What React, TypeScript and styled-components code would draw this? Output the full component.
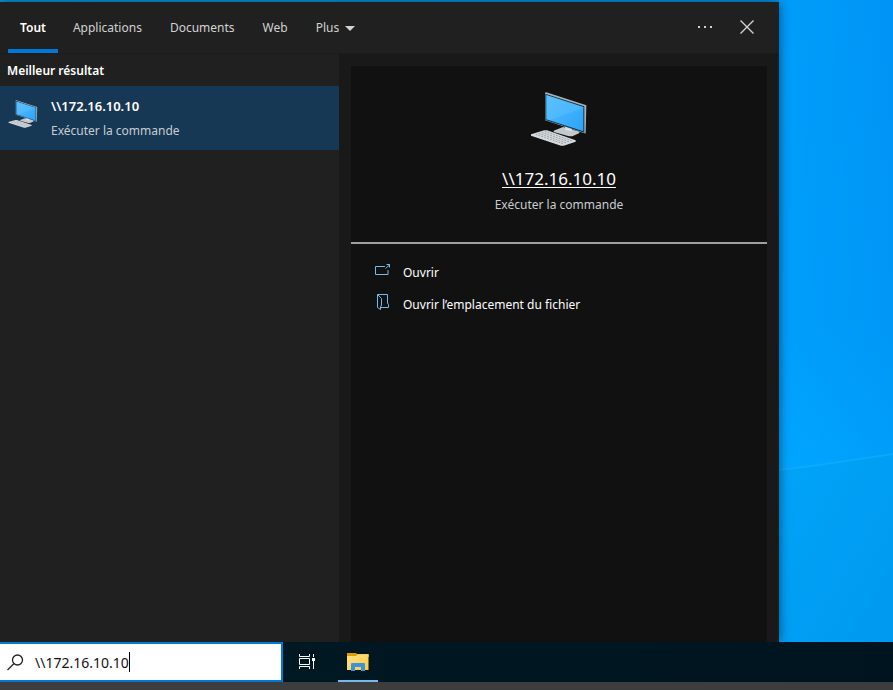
import React, { useState } from "react";
import styled, { createGlobalStyle } from "styled-components";

const GlobalStyle = createGlobalStyle`
  *, *::before, *::after { box-sizing: border-box; }
  body {
    margin: 0;
    font-family: "Noto Sans", "Open Sans", sans-serif;
    font-size: 12px;
    line-height: 20px;
    color: #fff;
  }
  button, input { font: inherit; color: inherit; border: 0; padding: 0; background: none; }
  h1, h2, p, ul { margin: 0; padding: 0; font: inherit; }
  svg { display: block; flex: none; }
`;

const Screen = styled.div`
  display: flex;
  flex-direction: column;
  min-height: 100vh;
  background: #3d3d3e;
`;

const Desktop = styled.main`
  flex: 1;
  display: grid;
  grid-template-columns: minmax(0, 1fr) 114px;
  padding-top: 2px;
  overflow: hidden;
  background: linear-gradient(90deg, #0a96de, #0096ea);
`;

const Wallpaper = styled.svg`
  width: 100%;
  height: calc(100% + 2px);
  margin-top: -2px;
`;

const Panel = styled.section`
  display: flex;
  flex-direction: column;
  z-index: 1;
  background: #191919;
  box-shadow: 0 0 10px rgba(0, 20, 40, 0.6);
`;

const Header = styled.header`
  display: flex;
  justify-content: space-between;
  height: 52px;
  padding: 0 19px 0 8px;
  background: #202020;
  border-bottom: 1px solid #1c1c1c;
`;

const Tabs = styled.nav`
  display: flex;
  gap: 2px;
`;

const Tab = styled.button<{ $active?: boolean }>`
  display: flex;
  align-items: center;
  gap: 6px;
  padding: 5px ${(p) => (p.$active ? "12px" : "13px")} 0;
  border-bottom: 4px solid ${(p) => (p.$active ? "#0078d7" : "transparent")};
  color: ${(p) => (p.$active ? "#fff" : "#d2d2d2")};
  font-weight: ${(p) => (p.$active ? 600 : 400)};
`;

const WindowActions = styled.div`
  display: flex;
  align-items: center;
  gap: 16px;
  padding-bottom: 2px;
`;

const IconButton = styled.button`
  display: grid;
  place-items: center;
  width: 26px;
  height: 32px;
  color: #d2d2d2;
`;

const Columns = styled.div`
  flex: 1;
  display: grid;
  grid-template-columns: 339px minmax(0, 1fr);
`;

const Results = styled.div`
  background: #202020;
`;

const GroupTitle = styled.h2`
  padding: 7px 7px 5px;
  font-weight: 600;
`;

const Result = styled.button`
  display: flex;
  gap: 13px;
  width: 100%;
  height: 64px;
  padding: 10px 8px 9px;
  text-align: left;
  background: #173854;
`;

const ResultIcon = styled.span`
  padding-top: 4px;
`;

const ResultText = styled.span`
  display: flex;
  flex-direction: column;
  gap: 5px;
`;

const ResultName = styled.span`
  font-size: 13px;
  font-weight: 600;
`;

const Kind = styled.span`
  color: #c8ccd0;
`;

const Preview = styled.article`
  margin: 12px 12px 0;
  background: #111;
`;

const Hero = styled.div`
  display: flex;
  flex-direction: column;
  align-items: center;
  height: 178px;
  padding-top: 26px;
  border-bottom: 2px solid #a0a0a0;
`;

const HeroName = styled.a`
  margin: 20px 0 3px;
  font-size: 17px;
  line-height: 26px;
  color: #fff;
  text-decoration: underline;
  text-decoration-thickness: 1px;
  text-underline-offset: 2px;
`;

const Actions = styled.ul`
  padding: 12px 0;
  list-style: none;
`;

const Action = styled.button`
  display: flex;
  align-items: center;
  gap: 12px;
  width: 100%;
  height: 32px;
  padding: 2px 24px 0;
  text-align: left;

  svg { margin-bottom: 6px; }
`;

const Taskbar = styled.footer`
  display: flex;
  height: 40px;
  margin-bottom: 8px;
  background: linear-gradient(90deg, #001a22, #001420);
`;

const SearchBox = styled.label`
  display: flex;
  align-items: center;
  width: 283px;
  padding-left: 7px;
  border: 2px solid #0078d7;
  border-left: 0;
  background: #fff;
  color: #111;
`;

const SearchInput = styled.input`
  field-sizing: content;
  margin-left: 11px;
  padding-top: 2px;
  font-size: 14px;
  outline: 0;
`;

const Caret = styled.span`
  width: 1px;
  height: 20px;
  background: #000;
`;

const TaskButton = styled.button<{ $running?: boolean }>`
  display: grid;
  place-items: center;
  width: ${(p) => (p.$running ? "40px" : "49px")};
  margin-right: ${(p) => (p.$running ? "0" : "6px")};
  padding-top: ${(p) => (p.$running ? "2px" : "0")};
  border-bottom: 2px solid ${(p) => (p.$running ? "#76b9ed" : "transparent")};
`;

function ComputerIcon({ width, height }: { width: number; height: number }) {
  return (
    <svg width={width} height={height} viewBox="36 34 168 162" aria-hidden="true">
      <defs>
        <linearGradient id="screen" x1="0" y1="0" x2="1" y2="1">
          <stop offset="0" stopColor="#55bdff" />
          <stop offset="1" stopColor="#2ba4fb" />
        </linearGradient>
      </defs>
      <path d="M104 150 L132 139 L182 153 L180 158 L160 167 L150 167 L104 154Z" fill="#c3c9cd" />
      <path d="M137 132 L160 139 L158 152 L139 149Z" fill="#dce0e2" />
      <path d="M78 36 L82 35 L202 74 L200 158 L196 158 L78 119Z" fill="#a8b1b7" />
      <path d="M79 39 L196 77 L196 156 L79 118Z" fill="#15344c" />
      <path d="M82 43 L193 79 L193 152 L82 116Z" fill="url(#screen)" />
      <path d="M82 43 L193 79 L193 82 L92 119 L82 116Z" fill="#66c5ff" opacity=".35" />
      <path d="M36 161 L76 149 L84 149 L170 179 L170 183 L134 195 L126 195 L36 165Z" fill="#d5dadd" />
      <g stroke="#8e979d" strokeWidth="2.5" strokeDasharray="6 3">
        <path d="M50 161 L134 190" />
        <path d="M59 158 L142 187" />
        <path d="M68 155 L151 184" />
        <path d="M77 152 L160 181" />
      </g>
    </svg>
  );
}

function OpenIcon() {
  return (
    <svg width="16" height="16" viewBox="0 0 16 16" fill="none" stroke="#76b9ed" aria-hidden="true">
      <path d="M10 4.500H.5v8h12.500V8M10.500 6.500L15 2.500M11.500 2.500H14.500V5.500" />
    </svg>
  );
}

function LocationIcon() {
  return (
    <svg width="16" height="16" viewBox="0 0 16 16" fill="none" stroke="#76b9ed" aria-hidden="true">
      <path d="M2.500.5H12.500V9L13.500 10.500V13.500H6M2.500.5V13.500L5.500 15.500V13L6.500 11V4.500L2.500.5" />
    </svg>
  );
}

function TaskViewIcon() {
  return (
    <svg width="17" height="17" viewBox="0 0 17 17" fill="none" stroke="#fff" aria-hidden="true">
      <path d="M.5 1V3.500H10.500V1M.5 5.500H10.500V11.500H.5ZM.5 16V13.500H10.500V16M14.500 1V4M14.500 8V16" />
      <path d="M13 5h3v3h-3z" fill="#fff" stroke="none" />
    </svg>
  );
}

function FolderIcon() {
  return (
    <svg width="22" height="18" viewBox="0 0 22 18" aria-hidden="true">
      <defs>
        <linearGradient id="folder" x1="0" y1="0" x2="1" y2="1">
          <stop offset="0" stopColor="#ffe08a" />
          <stop offset="1" stopColor="#ffca3e" />
        </linearGradient>
      </defs>
      <path d="M0 0h9l1 1h11.500v3H0z" fill="#e29b00" />
      <path d="M10 1h11.500v3H10z" fill="#f8cd58" />
      <path d="M0 3h9l1-1h11.500v15H0z" fill="url(#folder)" />
      <path d="M4 18v-7q0-1 1-1h12q1 0 1 1v7h-4v-4H8v4z" fill="#3a94db" />
    </svg>
  );
}

const tabs = ["Tout", "Applications", "Documents", "Web"];

export default function App() {
  const [query, setQuery] = useState("\\\\172.16.10.10");
  const [active, setActive] = useState("Tout");

  return (
    <>
      <GlobalStyle />
      <Screen>
        <Desktop>
          <Panel>
            <Header>
              <Tabs>
                {tabs.map((tab) => (
                  <Tab key={tab} $active={tab === active} onClick={() => setActive(tab)}>
                    {tab}
                  </Tab>
                ))}
                <Tab>
                  Plus
                  <svg width="10" height="5" viewBox="0 0 10 5" aria-hidden="true">
                    <path d="M0 0h10L5 5z" fill="#d2d2d2" />
                  </svg>
                </Tab>
              </Tabs>
              <WindowActions>
                <IconButton aria-label="Options">
                  <svg width="14" height="2" viewBox="0 0 14 2" aria-hidden="true">
                    <path d="M0 0h2v2H0zM6 0h2v2H6zM12 0h2v2h-2z" fill="currentColor" />
                  </svg>
                </IconButton>
                <IconButton aria-label="Fermer">
                  <svg width="14" height="14" viewBox="0 0 14 14" aria-hidden="true">
                    <path d="M.5.5l13 13M13.500.5L.5 13.500" stroke="currentColor" strokeWidth="1.400" />
                  </svg>
                </IconButton>
              </WindowActions>
            </Header>
            <Columns>
              <Results>
                <GroupTitle>Meilleur résultat</GroupTitle>
                <Result>
                  <ResultIcon>
                    <ComputerIcon width={30} height={28} />
                  </ResultIcon>
                  <ResultText>
                    <ResultName>{"\\\\172.16.10.10"}</ResultName>
                    <Kind>Exécuter la commande</Kind>
                  </ResultText>
                </Result>
              </Results>
              <Preview>
                <Hero>
                  <ComputerIcon width={56} height={54} />
                  <HeroName href="#open">{"\\\\172.16.10.10"}</HeroName>
                  <Kind>Exécuter la commande</Kind>
                </Hero>
                <Actions>
                  <li>
                    <Action>
                      <OpenIcon />
                      Ouvrir
                    </Action>
                  </li>
                  <li>
                    <Action>
                      <LocationIcon />
                      Ouvrir l’emplacement du fichier
                    </Action>
                  </li>
                </Actions>
              </Preview>
            </Columns>
          </Panel>
          <Wallpaper viewBox="0 0 114 642" preserveAspectRatio="none" aria-hidden="true">
            <defs>
              <linearGradient id="upper" x1="0" y1="0" x2="0" y2="1">
                <stop offset="0" stopColor="#0099f8" />
                <stop offset="0.500" stopColor="#009cfa" />
                <stop offset="0.730" stopColor="#00a8ff" />
              </linearGradient>
              <linearGradient id="lower" x1="0" y1="0" x2="1" y2="1">
                <stop offset="0" stopColor="#00a4f8" />
                <stop offset="1" stopColor="#0099f0" />
              </linearGradient>
              <linearGradient id="side" x1="0" y1="0" x2="1" y2="0">
                <stop offset="0" stopColor="#00a4ff" stopOpacity=".35" />
                <stop offset="1" stopColor="#008cf0" stopOpacity=".35" />
              </linearGradient>
            </defs>
            <path d="M0 0h114v642H0z" fill="url(#upper)" />
            <path d="M0 0h114v454L40 465L0 470z" fill="url(#side)" />
            <path d="M0 470L40 465L114 454V642H0z" fill="url(#lower)" />
            <path d="M0 470L40 465L114 454" stroke="#18b0ff" strokeWidth="2" fill="none" opacity=".5" />
          </Wallpaper>
        </Desktop>
        <Taskbar>
          <SearchBox>
            <svg width="17" height="17" viewBox="0 0 17 17" fill="none" stroke="#222" strokeWidth="1.300" aria-hidden="true">
              <circle cx="10.500" cy="6" r="5" />
              <path d="M7 9.500L.5 16" />
            </svg>
            <SearchInput
              aria-label="Rechercher"
              value={query}
              onChange={(e) => setQuery(e.target.value)}
            />
            <Caret />
          </SearchBox>
          <TaskButton aria-label="Affichage des tâches">
            <TaskViewIcon />
          </TaskButton>
          <TaskButton $running aria-label="Explorateur de fichiers">
            <FolderIcon />
          </TaskButton>
        </Taskbar>
      </Screen>
    </>
  );
}
